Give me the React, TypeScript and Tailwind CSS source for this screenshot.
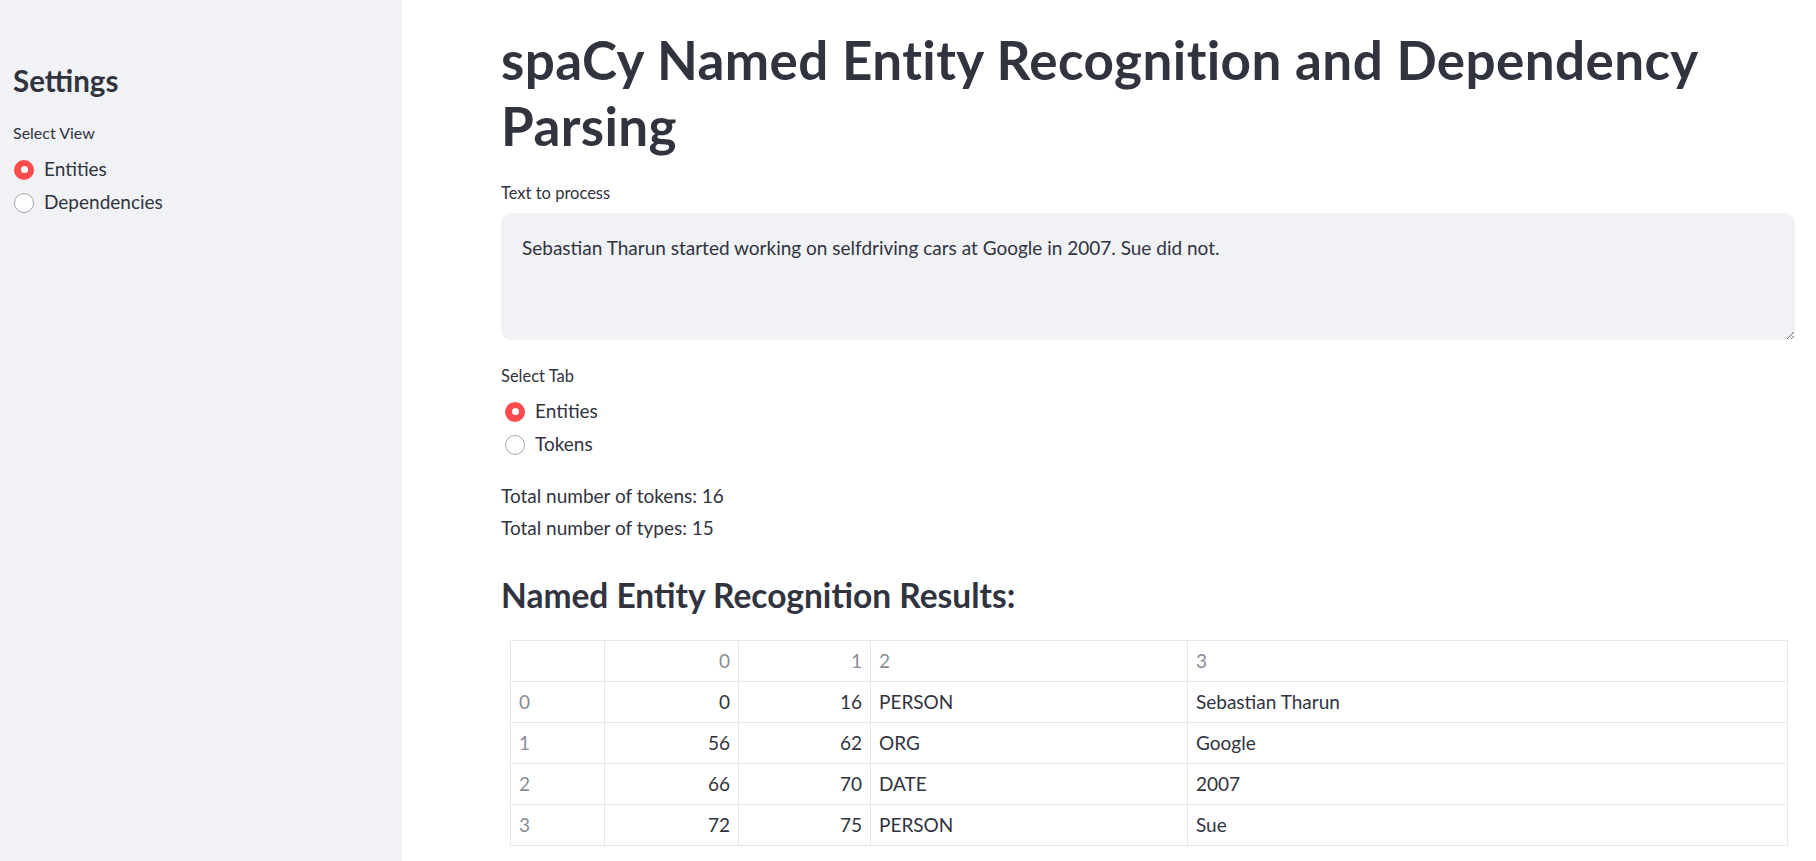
import React from 'react';

const rows = [
  { idx: '0', start: '0', end: '16', label: 'PERSON', text: 'Sebastian Tharun' },
  { idx: '1', start: '56', end: '62', label: 'ORG', text: 'Google' },
  { idx: '2', start: '66', end: '70', label: 'DATE', text: '2007' },
  { idx: '3', start: '72', end: '75', label: 'PERSON', text: 'Sue' },
];

const Radio: React.FC<{ label: string; checked?: boolean }> = ({ label, checked }) => (
  <div className="flex items-center h-[33px]">
    {checked ? (
      <span className="w-[20px] h-[20px] rounded-full bg-[#ff4b4b] flex items-center justify-center">
        <span className="w-[7px] h-[7px] rounded-full bg-white" />
      </span>
    ) : (
      <span className="w-[20px] h-[20px] rounded-full bg-white border border-[#a3a6ad]" />
    )}
    <span className="ml-[10px] text-[19px] text-[#31333f]">{label}</span>
  </div>
);

const cell = 'h-[41px] px-[8px] border border-[#e6e8eb] font-normal';

export default function App() {
  return (
    <div className="flex min-h-[861px] bg-white font-['Lato',sans-serif] text-[#31333f]">
      <aside className="w-[402px] shrink-0 bg-[#f0f2f6] pl-[13px] pt-[62px]">
        <h2 className="text-[29.5px] leading-[38px] font-bold">Settings</h2>
        <p className="mt-[22px] text-[16px] leading-[22px]">Select View</p>
        <div className="mt-[9px] pl-[1px]">
          <Radio label="Entities" checked />
          <Radio label="Dependencies" />
        </div>
      </aside>

      <main className="flex-1 pl-[99px] pr-[21px] pt-[27px] pb-[16px]">
        <h1 className="text-[53px] leading-[66px] font-bold tracking-[0.4px]">
          spaCy Named Entity Recognition and Dependency Parsing
        </h1>

        <p className="mt-[23px] text-[16.5px] leading-[22px]">Text to process</p>
        <textarea
          className="mt-[9px] block w-full h-[127px] rounded-[10px] bg-[#f0f2f6] px-[21px] py-[20px] text-[19px] leading-[30px] text-[#31333f] outline-none resize-y"
          defaultValue="Sebastian Tharun started working on selfdriving cars at Google in 2007. Sue did not."
        />

        <p className="mt-[25px] text-[16.5px] leading-[22px]">Select Tab</p>
        <div className="mt-[8px] pl-[4px]">
          <Radio label="Entities" checked />
          <Radio label="Tokens" />
        </div>

        <div className="mt-[19px] text-[19px] leading-[32px]">
          <p>Total number of tokens: 16</p>
          <p>Total number of types: 15</p>
        </div>

        <h3 className="mt-[29px] text-[33.5px] leading-[44px] font-bold">Named Entity Recognition Results:</h3>

        <div className="mt-[23px] ml-[9px] mr-[7px]">
          <table className="w-full table-fixed border-collapse text-[19px]">
            <colgroup>
              <col className="w-[94px]" />
              <col className="w-[134px]" />
              <col className="w-[132px]" />
              <col className="w-[317px]" />
              <col />
            </colgroup>
            <thead>
              <tr className="text-[#8a8c94]">
                <th className={`${cell} text-left`}></th>
                <th className={`${cell} text-right`}>0</th>
                <th className={`${cell} text-right`}>1</th>
                <th className={`${cell} text-left`}>2</th>
                <th className={`${cell} text-left`}>3</th>
              </tr>
            </thead>
            <tbody>
              {rows.map((r) => (
                <tr key={r.idx}>
                  <td className={`${cell} text-left text-[#8a8c94]`}>{r.idx}</td>
                  <td className={`${cell} text-right`}>{r.start}</td>
                  <td className={`${cell} text-right`}>{r.end}</td>
                  <td className={`${cell} text-left`}>{r.label}</td>
                  <td className={`${cell} text-left`}>{r.text}</td>
                </tr>
              ))}
            </tbody>
          </table>
        </div>
      </main>
    </div>
  );
}
